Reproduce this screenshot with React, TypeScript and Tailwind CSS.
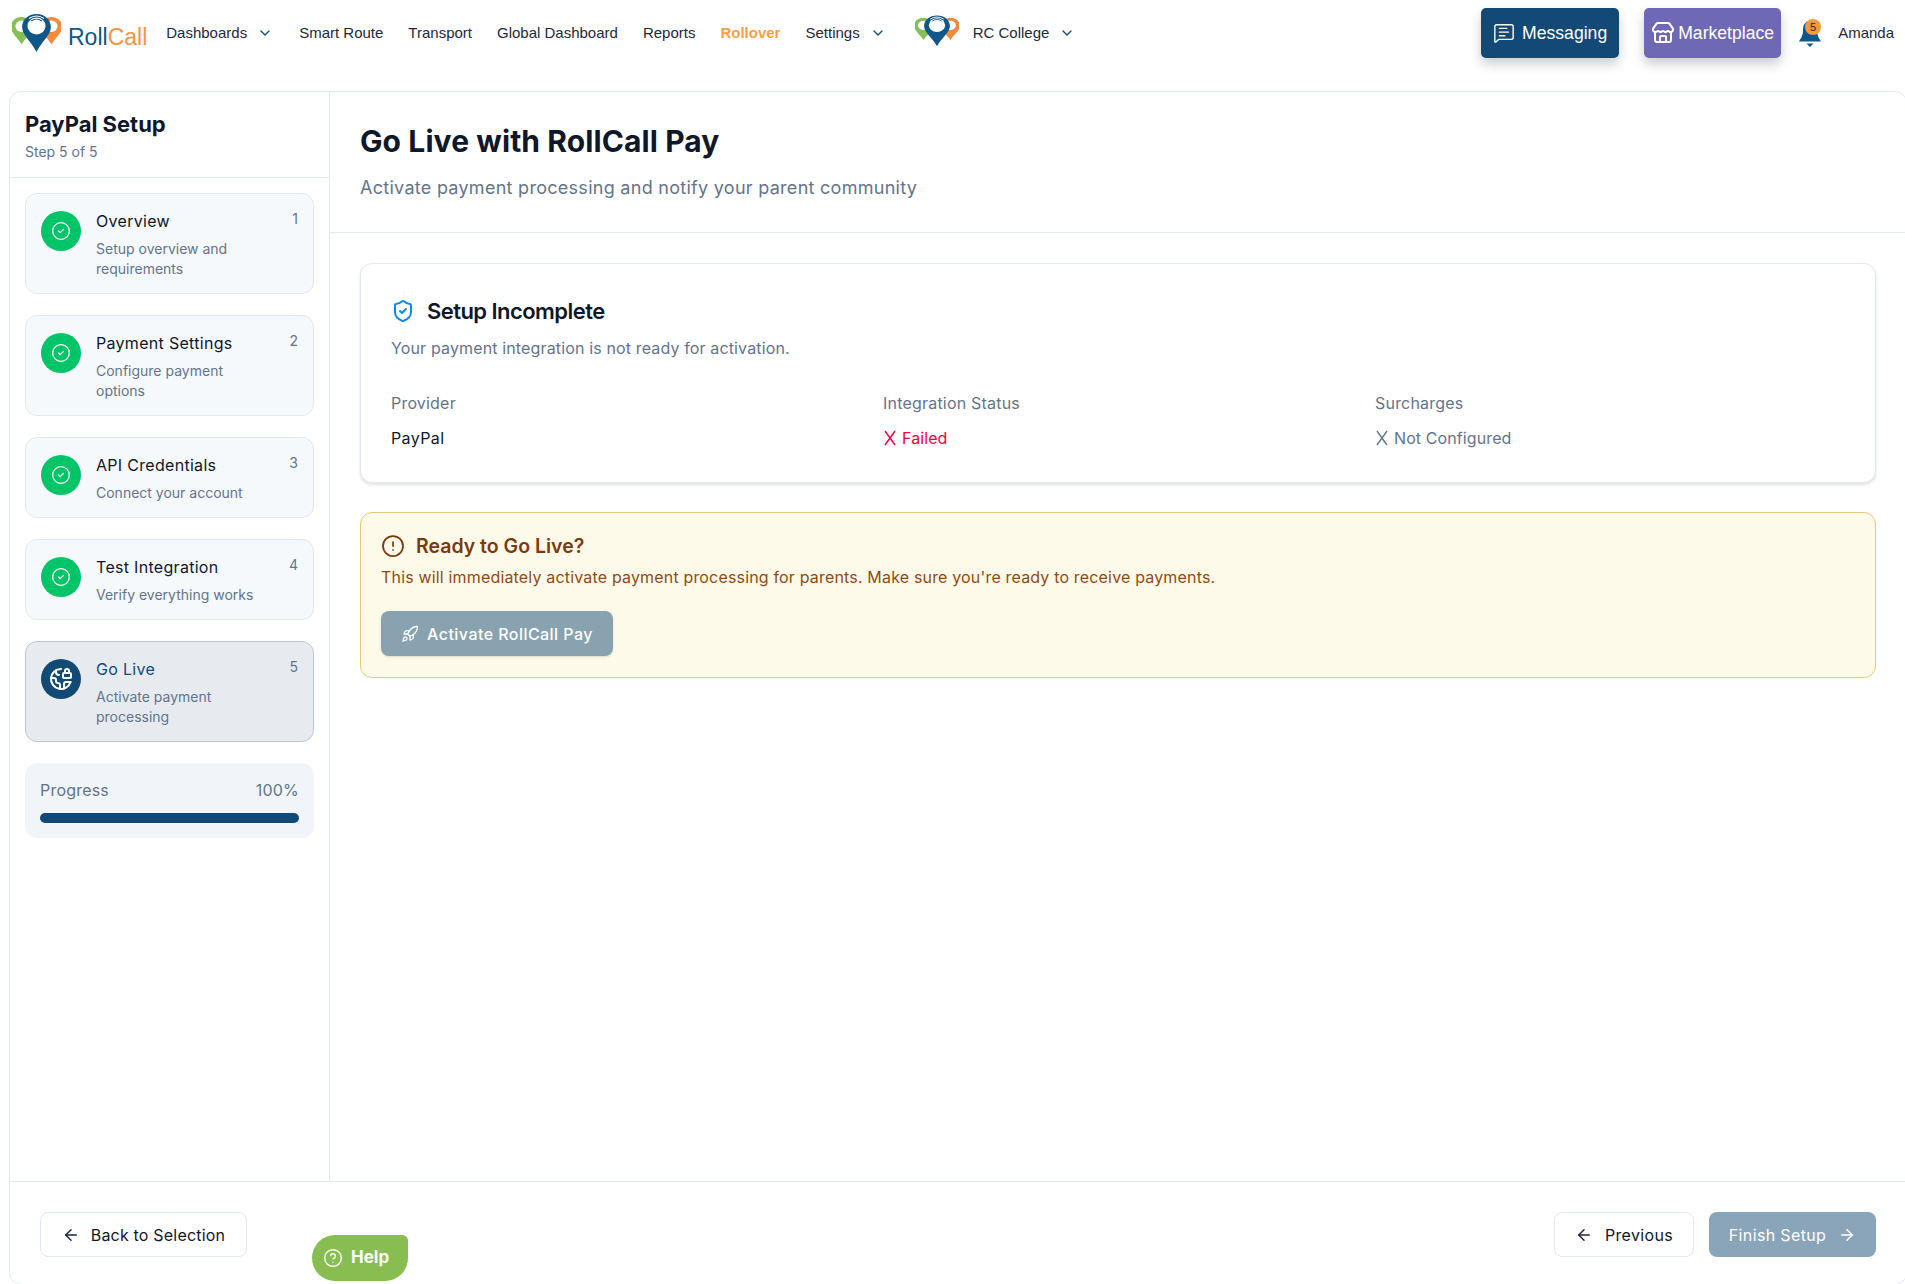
import {
  ArrowLeft,
  ArrowRight,
  ChevronDown,
  CircleAlert,
  CircleCheck,
  CircleHelp,
  EarthLock,
  MessageSquareText,
  Rocket,
  ShieldCheck,
  Store,
} from "lucide-react";

const steps = [
  { num: 1, title: "Overview", desc: "Setup overview and requirements" },
  { num: 2, title: "Payment Settings", desc: "Configure payment options" },
  { num: 3, title: "API Credentials", desc: "Connect your account" },
  { num: 4, title: "Test Integration", desc: "Verify everything works" },
  { num: 5, title: "Go Live", desc: "Activate payment processing", active: true },
];

function Pin({ color, x, y, scale }: { color: string; x: number; y: number; scale: number }) {
  return (
    <g transform={`translate(${x} ${y}) scale(${scale})`}>
      <path
        d="M0 -14C-7.7 -14 -14 -7.9 -14 -0.3C-14 8 -5 15 0 24C5 15 14 8 14 -0.3C14 -7.9 7.7 -14 0 -14Z"
        fill={color}
      />
      <circle cx="0" cy="-1" r="8" fill="#fff" />
    </g>
  );
}

function LogoMark({ className }: { className: string }) {
  return (
    <svg viewBox="0 0 46 42" preserveAspectRatio="none" className={className}>
      <Pin color="#86bf53" x={9} y={16} scale={0.72} />
      <Pin color="#f58a3c" x={37} y={16} scale={0.72} />
      <g>
        <path
          d="M23 3C15 3 9.5 9 9.5 16C9.5 24 18.5 31 23 41C27.5 31 36.5 24 36.5 16C36.5 9 31 3 23 3Z"
          fill="#0f5689"
        />
        <circle cx="23" cy="15" r="8.5" fill="#fff" />
        <path d="M16 7.5A11 11 0 0 1 30 7.5" fill="none" stroke="#fff" strokeWidth="1" />
        <path d="M18 10A8 8 0 0 1 28 10" fill="none" stroke="#0f5689" strokeWidth="1" />
      </g>
    </svg>
  );
}

function NavItem({ label, caret, className }: { label: string; caret?: boolean; className?: string }) {
  return (
    <div className={`flex items-center ${className ?? ""}`}>
      <span>{label}</span>
      {caret && <ChevronDown size={16} strokeWidth={2} className="ml-[10px] text-[#134a75]" />}
    </div>
  );
}

function FailMark({ className }: { className: string }) {
  return (
    <svg viewBox="0 0 13 16" className={`mr-[6px] h-4 w-[13px] ${className}`} fill="none" stroke="currentColor" strokeWidth="1.4">
      <path d="M2 1L12 15M12 1L2 15" />
    </svg>
  );
}

function StepCard({ num, title, desc, active }: { num: number; title: string; desc: string; active?: boolean }) {
  return (
    <div
      className={`flex rounded-xl border pl-[15px] pr-[15px] pt-[17px] pb-[14px] ${
        active ? "border-[#b9c6d3] bg-[#e7ebf0]" : "border-[#e2e8f0] bg-[#f6f9fb]"
      }`}
    >
      <div
        className={`flex h-10 w-10 shrink-0 items-center justify-center rounded-full text-white ${
          active ? "bg-[#134a75]" : "bg-[#00c468]"
        }`}
      >
        {active ? <EarthLock size={24} strokeWidth={2} /> : <CircleCheck size={20} strokeWidth={1.5} />}
      </div>
      <div className="ml-[15px] min-w-0 flex-1">
        <div className={`-mt-[2px] text-[16px] leading-[24px] tracking-[0.3px] ${active ? "text-[#134a75]" : "text-[#0f172a]"}`}>
          {title}
        </div>
        <div className="mt-[6px] w-[165px] text-[14px] leading-[20px] text-[#64748b]">{desc}</div>
      </div>
      <div className="-mt-[2px] text-[14px] leading-[20px] text-[#64748b]">{num}</div>
    </div>
  );
}

function InfoCol({ label, children }: { label: string; children: React.ReactNode }) {
  return (
    <div>
      <div className="text-[16px] leading-[24px] tracking-[0.2px] text-[#64748b]">{label}</div>
      <div className="mt-[11px] flex items-center text-[16px] leading-[24px] tracking-[0.1px]">{children}</div>
    </div>
  );
}

export default function App() {
  return (
    <div className="relative flex h-[1284px] w-[1905px] flex-col overflow-hidden bg-white font-['Inter',sans-serif]">
      <header className="flex h-[91px] shrink-0 items-start font-['Liberation_Sans',sans-serif] text-[15px] text-[#1e293b]">
        <div className="ml-[12px] mt-[11px] flex items-center">
          <LogoMark className="h-[42px] w-[49px]" />
          <span className="ml-[7px] mt-[10px] text-[23px] leading-[30px] text-[#0f5689]">
            Roll<span className="text-[#f79344]">Call</span>
          </span>
        </div>
        <nav className="ml-[19px] mt-[24px] flex h-[18px] items-center">
          <NavItem label="Dashboards" caret />
          <NavItem label="Smart Route" className="ml-[26px]" />
          <NavItem label="Transport" className="ml-[25px]" />
          <NavItem label="Global Dashboard" className="ml-[25px]" />
          <NavItem label="Reports" className="ml-[25px]" />
          <NavItem label="Rollover" className="ml-[25px] font-bold text-[#fb9f45]" />
          <NavItem label="Settings" caret className="ml-[25px]" />
          <LogoMark className="ml-[29px] -mt-[6px] h-[34px] w-[44px]" />
          <NavItem label="RC College" caret className="ml-[14px]" />
        </nav>
        <div className="ml-auto mt-[8px] flex items-start">
          <button className="flex h-[50px] w-[138px] items-center justify-center gap-[7px] rounded-[5px] bg-[#134a75] text-[17.6px] text-white shadow-[0_6px_12px_rgba(0,0,0,0.2)]">
            <MessageSquareText size={22} strokeWidth={1.5} />
            Messaging
          </button>
          <button className="ml-[25px] flex h-[50px] w-[137px] items-center justify-center gap-[3px] rounded-[5px] bg-[#6f68b4] text-[17.6px] text-white shadow-[0_6px_12px_rgba(0,0,0,0.2)]">
            <Store size={24} strokeWidth={2} />
            Marketplace
          </button>
          <div className="relative ml-[17px] mt-[10px] h-[30px] w-[24px]">
            <svg viewBox="0 0 24 30" className="h-[30px] w-[24px]">
              <path d="M12 3C7 3 5 7.5 5 12C5 18 3 20 1 23.5H23C21 20 19 18 19 12C19 7.5 17 3 12 3Z" fill="#0f5689" />
              <path d="M8.5 25.5H15.5L12 29Z" fill="#0f5689" />
            </svg>
            <span className="absolute left-[7px] top-[1px] flex h-[16px] w-[16px] items-center justify-center rounded-full bg-[#f39a3e] text-[11px] leading-none text-[#1e293b]">
              5
            </span>
          </div>
          <span className="ml-[16px] mr-[11px] mt-[16px] text-[15px] leading-[18px]">Amanda</span>
        </div>
      </header>

      <main className="-mb-[1px] -mr-[2px] ml-[9px] flex min-h-0 flex-1 flex-col rounded-xl border border-[#e2e8f0]">
        <div className="flex min-h-0 flex-1">
          <aside className="flex w-[320px] shrink-0 flex-col border-r border-[#e2e8f0]">
            <div className="h-[86px] shrink-0 border-b border-[#e2e8f0] pl-[15px] pt-[18px]">
              <h2 className="text-[22px] font-bold leading-[28px] text-[#0f172a]">PayPal Setup</h2>
              <p className="mt-[4px] text-[14px] leading-[20px] text-[#64748b]">Step 5 of 5</p>
            </div>
            <div className="flex flex-col gap-[21px] px-[15px] pt-[15px]">
              {steps.map((s) => (
                <StepCard key={s.num} {...s} />
              ))}
              <div className="rounded-xl bg-[#f1f5f9] px-[15px] pt-[15px] pb-[15px]">
                <div className="flex justify-between text-[16px] leading-[24px] tracking-[0.2px] text-[#64748b]">
                  <span>Progress</span>
                  <span>100%</span>
                </div>
                <div className="mt-[11px] h-[10px] rounded-full bg-[#134a75]" />
              </div>
            </div>
          </aside>

          <section className="min-w-0 flex-1">
            <div className="h-[141px] border-b border-[#e2e8f0] pl-[30px] pt-[31px]">
              <h1 className="text-[30px] font-bold leading-[36px] tracking-[0.1px] text-[#0f172a]">Go Live with RollCall Pay</h1>
              <p className="mt-[15px] text-[18px] leading-[28px] tracking-[0.28px] text-[#64748b]">
                Activate payment processing and notify your parent community
              </p>
            </div>
            <div className="flex flex-col gap-[29px] px-[30px] pt-[30px]">
              <div className="h-[220px] rounded-xl border border-[#e2e8f0] bg-white px-[30px] pt-[33px] shadow-[0_2px_3px_rgba(15,23,42,0.12)]">
                <div className="flex items-center gap-[12px]">
                  <ShieldCheck size={24} strokeWidth={2} className="text-[#0b8af2]" />
                  <h3 className="text-[22px] font-semibold leading-[28px] tracking-[-0.55px] text-[#0f172a]">
                    Setup Incomplete
                  </h3>
                </div>
                <p className="mt-[11px] text-[16px] leading-[24px] tracking-[0.14px] text-[#64748b]">
                  Your payment integration is not ready for activation.
                </p>
                <div className="mt-[31px] grid grid-cols-3 gap-[22px]">
                  <InfoCol label="Provider">
                    <span className="tracking-[0.4px] text-[#0f172a]">PayPal</span>
                  </InfoCol>
                  <InfoCol label="Integration Status">
                    <FailMark className="text-[#f5003d]" />
                    <span className="text-[#f5003d]">Failed</span>
                  </InfoCol>
                  <InfoCol label="Surcharges">
                    <FailMark className="text-[#64748b]" />
                    <span className="text-[#64748b]">Not Configured</span>
                  </InfoCol>
                </div>
              </div>

              <div className="h-[166px] rounded-xl border border-[#e6c878] bg-[#fefaea] px-[20px] pt-[19px]">
                <div className="flex items-center gap-[11px]">
                  <CircleAlert size={24} strokeWidth={1.75} className="text-[#7c3a0c]" />
                  <h3 className="text-[19.5px] font-semibold leading-[28px] text-[#7c3a0c]">Ready to Go Live?</h3>
                </div>
                <p className="mt-[5px] text-[16px] leading-[24px] tracking-[0.17px] text-[#924a12]">
                  This will immediately activate payment processing for parents. Make sure you're ready to receive payments.
                </p>
                <button className="mt-[22px] flex h-[45px] w-[232px] items-center justify-center gap-[8px] rounded-lg bg-[#88a2b0] text-[16px] font-medium tracking-[0.45px] text-white shadow-sm">
                  <Rocket size={18} strokeWidth={1.75} />
                  Activate RollCall Pay
                </button>
              </div>
            </div>
          </section>
        </div>

        <footer className="flex h-[103px] shrink-0 items-start justify-between border-t border-[#e2e8f0] pl-[30px] pr-[30px] pt-[30px]">
          <button className="flex h-[45px] w-[207px] items-center justify-center gap-[11px] rounded-lg border border-[#e2e8f0] bg-white text-[16px] tracking-[0.2px] text-[#0f172a]">
            <ArrowLeft size={18} strokeWidth={2} className="text-[#1e293b]" />
            Back to Selection
          </button>
          <div className="flex gap-[15px]">
            <button className="flex h-[45px] w-[140px] items-center justify-center gap-[12px] rounded-lg border border-[#e2e8f0] bg-white text-[16px] tracking-[0.35px] text-[#0f172a]">
              <ArrowLeft size={18} strokeWidth={2} className="text-[#1e293b]" />
              Previous
            </button>
            <button className="flex h-[45px] w-[167px] items-center justify-center gap-[12px] rounded-lg bg-[#8aa4b9] text-[16px] tracking-[0.35px] text-white">
              Finish Setup
              <ArrowRight size={18} strokeWidth={2} />
            </button>
          </div>
        </footer>
      </main>

      <button className="absolute left-[312px] top-[1235px] flex h-[46px] w-[96px] items-center gap-[8px] rounded-tl-[24px] rounded-tr-[6px] rounded-br-[24px] rounded-bl-[24px] bg-[#88bd52] pl-[11px] text-[17px] font-bold text-white">
        <CircleHelp size={20} strokeWidth={1.75} />
        Help
      </button>
    </div>
  );
}
